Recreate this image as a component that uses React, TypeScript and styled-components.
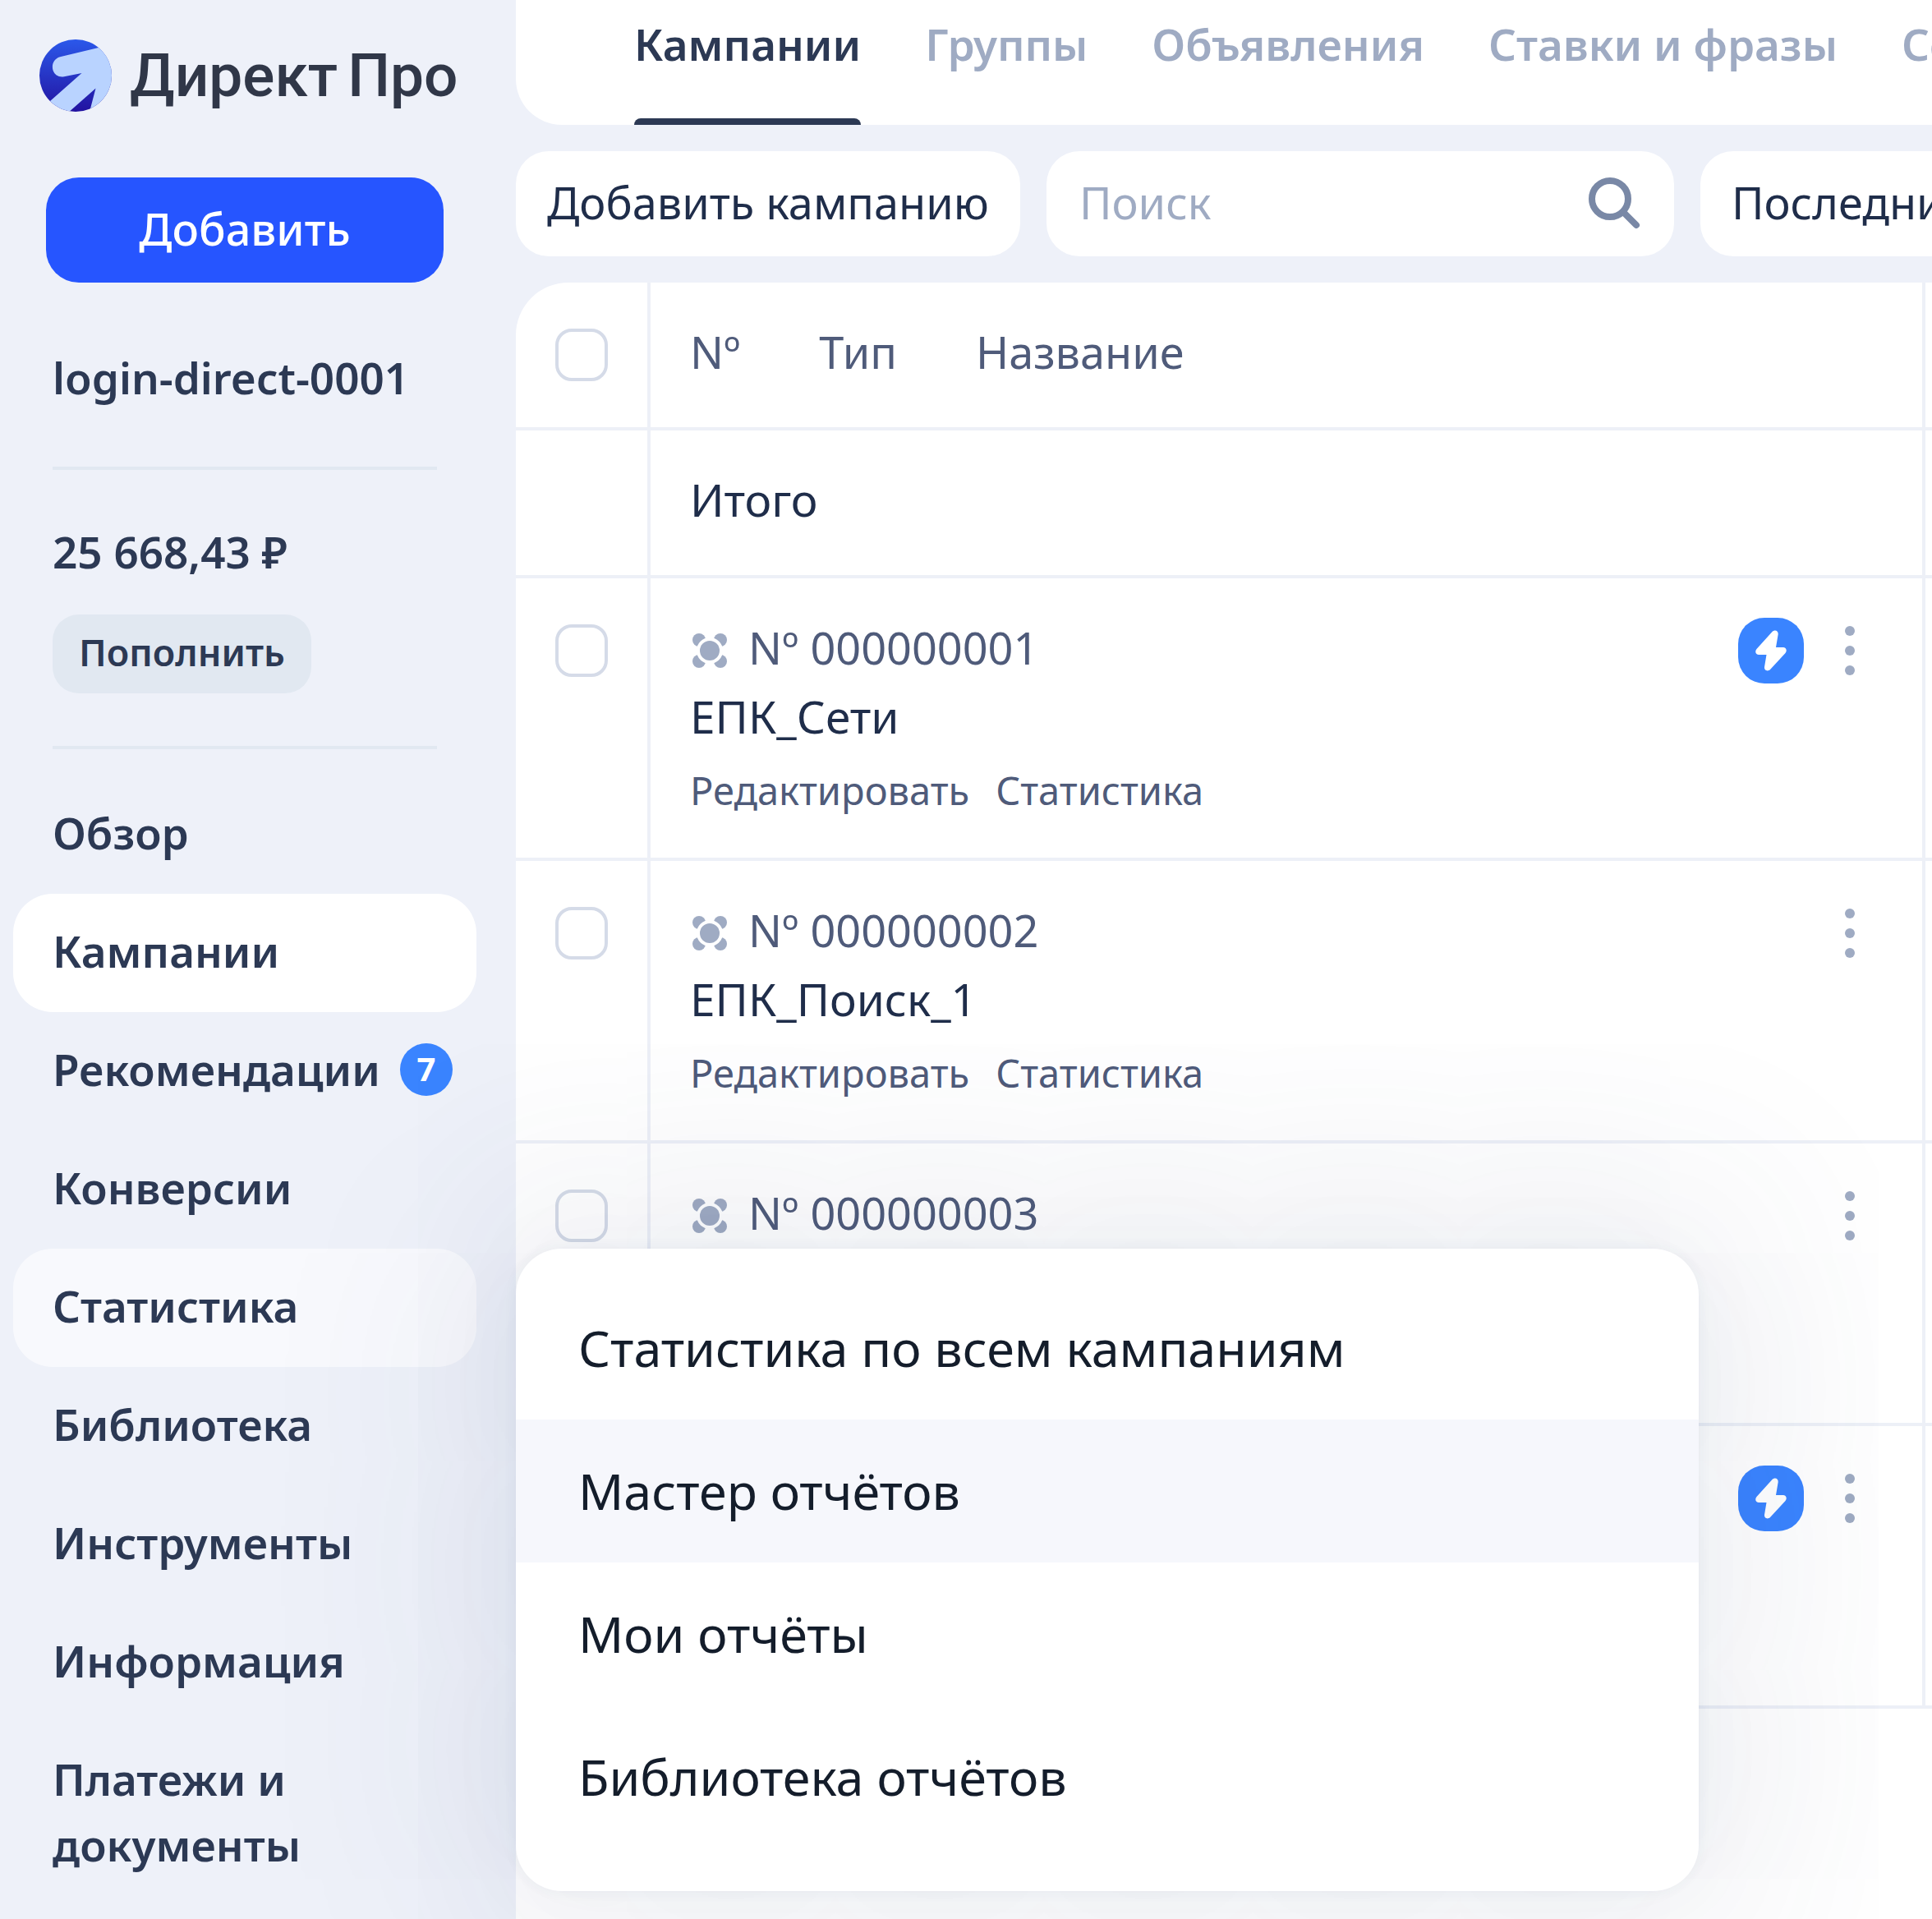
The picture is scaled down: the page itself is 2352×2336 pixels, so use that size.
import React from "react";
import styled, { createGlobalStyle, css } from "styled-components";

const color = {
  page: "#eef1f9",
  surface: "#ffffff",
  text: "#1f2d4a",
  nav: "#2c3954",
  title: "#303748",
  secondary: "#4f5b7a",
  muted: "#9fabc3",
  icon: "#7988a6",
  line: "#edf0f7",
  rule: "#e1e8f1",
  primary: "#2655ff",
  accent: "#3a84ff",
  box: "#d5dbe8",
  menuText: "#141d2b",
  menuHover: "#f6f7fc",
};

const GlobalStyle = createGlobalStyle`
  *, *::before, *::after { box-sizing: border-box; }
  body {
    margin: 0;
    background: ${color.page};
    color: ${color.text};
    font-family: "Noto Sans", "Open Sans", sans-serif;
    font-size: 54px;
    line-height: 80px;
    overflow-x: hidden;
  }
  button, input { font: inherit; color: inherit; border: 0; padding: 0; margin: 0; background: none; }
  button { cursor: pointer; white-space: nowrap; }
  a { color: inherit; text-decoration: none; }
  ul { list-style: none; margin: 0; padding: 0; }
  svg { display: block; }
`;

const Page = styled.div`
  display: grid;
  grid-template-columns: 628px minmax(0, 1fr);
  min-height: 100vh;
`;

const Sidebar = styled.aside`
  position: relative;
  z-index: 1;
  display: flex;
  flex-direction: column;
  color: ${color.nav};
  font-size: 53px;
  font-weight: 600;
`;

const Logo = styled.a`
  display: flex;
  align-items: center;
  gap: 22px;
  height: 88px;
  margin: 48px 0 80px 48px;
  color: ${color.title};
  white-space: nowrap;
`;

const LogoText = styled.span`
  display: flex;
  gap: 12px;
  font-family: Roboto, "Noto Sans", sans-serif;
  font-size: 73px;
  font-weight: 500;
`;

const AddButton = styled.button`
  height: 128px;
  margin: 0 88px 0 56px;
  padding-bottom: 4px;
  border-radius: 40px;
  background: ${color.primary};
  color: #fff;
  font-size: 54px;
  font-weight: 500;
`;

const Account = styled.section`
  display: flex;
  flex-direction: column;
  align-items: flex-start;
  margin: 0 96px 32px 64px;
`;

const Login = styled.div`
  width: 100%;
  padding: 76px 0 68px;
  border-bottom: 4px solid ${color.rule};
`;

const Balance = styled.div`
  width: 100%;
  padding: 60px 0 64px;
  border-bottom: 4px solid ${color.rule};
`;

const TopUpButton = styled.button`
  display: block;
  height: 96px;
  margin-top: 36px;
  padding: 0 32px 4px;
  border-radius: 32px;
  background: ${color.rule};
  font-size: 45px;
`;

const NavItem = styled.li`
  position: relative;
  padding: 0 48px 0 16px;
`;

const NavLink = styled.a<{ $state?: "active" | "open" }>`
  display: flex;
  align-items: center;
  gap: 24px;
  min-height: 144px;
  padding: 30px 32px 34px 48px;
  border-radius: 48px;
  ${({ $state }) => $state === "active" && css`background: ${color.surface};`}
  ${({ $state }) => $state === "open" && css`background: rgba(255, 255, 255, 0.6);`}
`;

const Badge = styled.span`
  flex: none;
  width: 64px;
  height: 64px;
  border-radius: 50%;
  background: ${color.accent};
  color: #fff;
  font-size: 40px;
  font-weight: 700;
  line-height: 62px;
  text-align: center;
`;

const Menu = styled.ul`
  position: absolute;
  top: 0;
  left: 100%;
  width: 1440px;
  padding: 34px 0 52px;
  border-radius: 56px;
  background: ${color.surface};
  color: ${color.menuText};
  font-size: 61px;
  font-weight: 400;
  box-shadow: 0 0 16px rgba(50, 70, 120, 0.06), 0 0 100px rgba(50, 70, 120, 0.04),
    0 0 260px 80px rgba(50, 70, 110, 0.09);
`;

const MenuLink = styled.a<{ $hover?: boolean }>`
  display: block;
  padding: 47px 76px;
  background: ${({ $hover }) => ($hover ? color.menuHover : "transparent")};
`;

const Main = styled.main`
  display: flex;
  flex-direction: column;
  gap: 32px;
  min-width: 0;
`;

const Tabs = styled.nav`
  display: flex;
  gap: 78px;
  height: 152px;
  padding-left: 144px;
  overflow: hidden;
  border-bottom-left-radius: 56px;
  background: ${color.surface};
`;

const Tab = styled.a<{ $active?: boolean }>`
  flex: none;
  height: 100%;
  padding-top: 14px;
  color: ${({ $active }) => ($active ? color.nav : color.muted)};
  font-size: 53px;
  font-weight: 600;
  ${({ $active }) =>
    $active &&
    css`
      &::after {
        content: "";
        display: block;
        height: 8px;
        margin-top: 50px;
        border-radius: 8px 8px 0 0;
        background: ${color.nav};
      }
    `}
`;

const Toolbar = styled.div`
  display: flex;
  gap: 32px;
  overflow: hidden;
`;

const ToolButton = styled.button`
  flex: none;
  height: 128px;
  padding: 0 38px 4px;
  border-radius: 40px;
  background: ${color.surface};
`;

const Search = styled.label`
  flex: none;
  display: flex;
  align-items: center;
  gap: 24px;
  width: 764px;
  height: 128px;
  padding: 0 40px;
  border-radius: 40px;
  background: ${color.surface};

  input {
    flex: 1;
    min-width: 0;
    padding-bottom: 4px;
    outline: none;
  }
  input::placeholder {
    color: ${color.muted};
    opacity: 1;
  }
`;

const TablePanel = styled.section`
  flex: 1;
  overflow: hidden;
  border-top-left-radius: 64px;
  background: ${color.surface};
`;

const Table = styled.table`
  width: 100%;
  table-layout: fixed;
  border-collapse: separate;
  border-spacing: 0;
  text-align: left;
`;

const CheckColumn = styled.col`
  width: 164px;
`;

const EdgeColumn = styled.col`
  width: 8px;
`;

const cellStyle = css`
  padding: 44px 48px 52px;
  vertical-align: top;
  border-bottom: 4px solid ${color.line};
  border-right: 4px solid ${color.line};
  &:last-child {
    padding: 0;
    border-right: 0;
  }
`;

const Cell = styled.td`
  ${cellStyle}
  font-size: 55px;
`;

const HeadCell = styled.th`
  ${cellStyle}
  color: ${color.secondary};
  font-weight: 400;
`;

const HeadLabels = styled.div`
  display: flex;
  gap: 96px;
`;

const Checkbox = styled.input.attrs({ type: "checkbox" })`
  && {
    appearance: none;
    display: block;
    width: 64px;
    height: 64px;
    margin: 12px 0 4px;
    border: 4px solid ${color.box};
    border-radius: 20px;
  }
`;

const Campaign = styled.div`
  display: flex;
  justify-content: space-between;
  height: 244px;
`;

const CampaignInfo = styled.div`
  display: flex;
  flex-direction: column;
  gap: 4px;
`;

const CampaignNumber = styled.div`
  display: flex;
  align-items: center;
  gap: 26px;
  padding-left: 3px;
  color: ${color.secondary};
  font-size: 54px;

  svg {
    margin-top: 8px;
  }
`;

const CampaignLinks = styled.div`
  display: flex;
  gap: 32px;
  margin-top: 6px;
  color: ${color.secondary};
  font-size: 47px;
`;

const CampaignActions = styled.div`
  display: flex;
  gap: 32px;
  padding: 4px 16px 0 0;
`;

const Bolt = styled.button`
  width: 80px;
  height: 80px;
  border-radius: 32px;
  background: ${color.accent};
`;

const MoreButton = styled.button`
  display: flex;
  flex-direction: column;
  align-items: center;
  justify-content: center;
  gap: 12px;
  width: 48px;
  height: 80px;

  span {
    width: 12px;
    height: 12px;
    border-radius: 50%;
    background: ${color.muted};
  }
`;

const LogoMark = () => (
  <svg width="88" height="88" viewBox="0 0 88 88" aria-hidden="true">
    <defs>
      <linearGradient id="mark" x1="0" y1="0" x2="0" y2="1">
        <stop offset="0" stopColor="#2b58ea" />
        <stop offset="1" stopColor="#2212a0" />
      </linearGradient>
      <clipPath id="disc">
        <circle cx="44" cy="44" r="44" />
      </clipPath>
    </defs>
    <g clipPath="url(#disc)">
      <rect width="88" height="88" fill="url(#mark)" />
      <path
        fill="#b9d3ff"
        d="M72 10 25 21.3C17.500 23.500 14.500 31 16.500 37.500 18.500 43.500 24 46.300 30 45.200L51.500 41 4 83 34 90 68.500 59.500 60 92H92V0Z"
      />
    </g>
  </svg>
);

const SearchIcon = () => (
  <svg width="64" height="64" viewBox="0 0 64 64" fill="none" stroke={color.icon} strokeWidth="8" strokeLinecap="round" aria-hidden="true">
    <circle cx="26" cy="26" r="22" />
    <path d="M42 42 58 58" />
  </svg>
);

const TypeIcon = () => (
  <svg width="42" height="42" viewBox="0 0 42 42" fill={color.muted} aria-hidden="true">
    <circle cx="8" cy="8" r="8" />
    <circle cx="34" cy="8" r="8" />
    <circle cx="8" cy="34" r="8" />
    <circle cx="34" cy="34" r="8" />
    <circle cx="21" cy="21" r="16" fill={color.surface} />
    <circle cx="21" cy="21" r="12" />
  </svg>
);

const BoltIcon = () => (
  <svg width="80" height="80" viewBox="0 0 80 80" fill="#fff" aria-hidden="true">
    <path d="M41.500 17C44.500 14 49 15.500 48.700 20L46 36H55C58.500 36 60 40 57.500 43L39 63C36 66 31.500 64 32 60L34.500 45H25C21.500 45 20 41 22.500 38Z" />
  </svg>
);

type NavEntry = { label: string; state?: "active" | "open"; badge?: number; menu?: string[] };

const navEntries: NavEntry[] = [
  { label: "Обзор" },
  { label: "Кампании", state: "active" },
  { label: "Рекомендации", badge: 7 },
  { label: "Конверсии" },
  {
    label: "Статистика",
    state: "open",
    menu: ["Статистика по всем кампаниям", "Мастер отчётов", "Мои отчёты", "Библиотека отчётов"],
  },
  { label: "Библиотека" },
  { label: "Инструменты" },
  { label: "Информация" },
  { label: "Платежи и документы" },
];

const tabs = ["Кампании", "Группы", "Объявления", "Ставки и фразы", "Сегменты"];

const campaigns = [
  { id: "000000001", name: "ЕПК_Сети", boosted: true },
  { id: "000000002", name: "ЕПК_Поиск_1" },
  { id: "000000003", name: "ЕПК_Поиск_2" },
  { id: "000000004", name: "ЕПК_Поиск_3", boosted: true },
];

export default function App() {
  return (
    <>
      <GlobalStyle />
      <Page>
        <Sidebar>
          <Logo href="#">
            <LogoMark />
            <LogoText>
              <span>Директ</span>
              <span>Про</span>
            </LogoText>
          </Logo>
          <AddButton type="button">Добавить</AddButton>
          <Account>
            <Login>login-direct-0001</Login>
            <Balance>
              25 668,43 ₽
              <TopUpButton type="button">Пополнить</TopUpButton>
            </Balance>
          </Account>
          <nav>
            <ul>
              {navEntries.map(({ label, state, badge, menu }) => (
                <NavItem key={label}>
                  <NavLink href="#" $state={state}>
                    {label}
                    {badge && <Badge>{badge}</Badge>}
                  </NavLink>
                  {menu && (
                    <Menu>
                      {menu.map((item, index) => (
                        <li key={item}>
                          <MenuLink href="#" $hover={index === 1}>{item}</MenuLink>
                        </li>
                      ))}
                    </Menu>
                  )}
                </NavItem>
              ))}
            </ul>
          </nav>
        </Sidebar>
        <Main>
          <Tabs>
            {tabs.map((tab, index) => (
              <Tab key={tab} href="#" $active={index === 0}>{tab}</Tab>
            ))}
          </Tabs>
          <Toolbar>
            <ToolButton type="button">Добавить кампанию</ToolButton>
            <Search>
              <input type="text" placeholder="Поиск" aria-label="Поиск" />
              <SearchIcon />
            </Search>
            <ToolButton type="button">Последние 7 дней</ToolButton>
          </Toolbar>
          <TablePanel>
            <Table>
              <colgroup>
                <CheckColumn />
                <col />
                <EdgeColumn />
              </colgroup>
              <thead>
                <tr>
                  <HeadCell><Checkbox aria-label="Выбрать все" /></HeadCell>
                  <HeadCell>
                    <HeadLabels>
                      <span>Nº</span>
                      <span>Тип</span>
                      <span>Название</span>
                    </HeadLabels>
                  </HeadCell>
                  <HeadCell />
                </tr>
              </thead>
              <tbody>
                <tr>
                  <Cell />
                  <Cell>Итого</Cell>
                  <Cell />
                </tr>
                {campaigns.map(({ id, name, boosted }) => (
                  <tr key={id}>
                    <Cell><Checkbox aria-label={name} /></Cell>
                    <Cell>
                      <Campaign>
                        <CampaignInfo>
                          <CampaignNumber><TypeIcon />Nº {id}</CampaignNumber>
                          <div>{name}</div>
                          <CampaignLinks>
                            <a href="#">Редактировать</a>
                            <a href="#">Статистика</a>
                          </CampaignLinks>
                        </CampaignInfo>
                        <CampaignActions>
                          {boosted && <Bolt type="button" aria-label="Ускорить"><BoltIcon /></Bolt>}
                          <MoreButton type="button" aria-label="Ещё"><span /><span /><span /></MoreButton>
                        </CampaignActions>
                      </Campaign>
                    </Cell>
                    <Cell />
                  </tr>
                ))}
              </tbody>
            </Table>
          </TablePanel>
        </Main>
      </Page>
    </>
  );
}
